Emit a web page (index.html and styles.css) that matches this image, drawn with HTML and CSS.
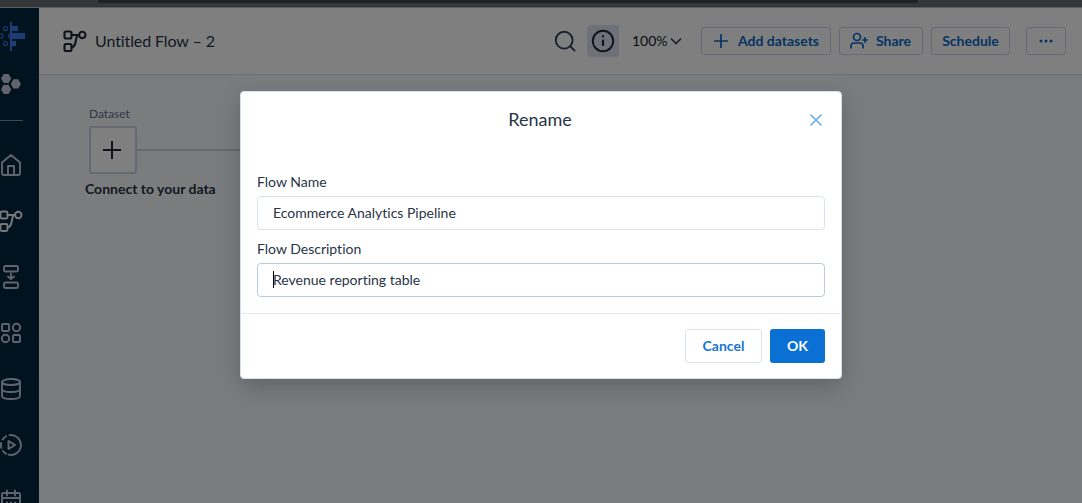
FILE: index.html
```html
<!DOCTYPE html>
<html lang="en">
<head>
<meta charset="utf-8">
<title>Untitled Flow – 2</title>
<link rel="stylesheet" href="styles.css">
</head>
<body>
<div class="browser-strip"><div class="address-bar"></div></div>
<div class="app">
  <nav class="sidebar">
    <a class="nav-item logo"><svg width="26" height="32" viewBox="0 0 26 32"><g fill="#3f7bea"><rect x="10" y="2" width="2" height="29"/><rect x="12" y="6" width="6" height="5"/><rect x="12" y="13" width="13" height="6"/><rect x="12" y="21" width="4" height="5"/></g><g fill="none" stroke="#3f7bea" stroke-width="1.1"><circle cx="5.4" cy="8.5" r="2"/><circle cx="1" cy="16" r="2"/><path d="M10.5 14a2 2 0 1 0 0 4"/><circle cx="5.4" cy="23.5" r="2"/></g></svg></a>
    <a class="nav-item apps"><svg width="24" height="24" viewBox="0 0 24 24" fill="currentColor"><path d="M4.600 2h5l2.600 4.500-2.600 4.600h-5L2 6.500zM4.600 12.800h5l2.600 4.600-2.600 4.600h-5L2 17.400zM14.300 7.300h5l2.600 4.600-2.600 4.600h-5l-2.500-4.600z"/></svg></a>
    <div class="nav-divider"></div>
    <a class="nav-item"><svg class="icon" viewBox="0 0 24 24"><path d="M3 9.500 12 2l9 7.500V20q0 2-2 2H5q-2 0-2-2zM9 22v-9h6v9"/></svg></a>
    <a class="nav-item active"><svg class="icon" viewBox="0 0 24 24"><rect x="1.500" y="2.500" width="7" height="7" rx="1.500"/><rect x="1.500" y="15" width="7" height="7" rx="1.500"/><circle cx="19.300" cy="6" r="3.200"/><path d="M8.500 6H16M8.500 18.500c5-.3 3.500-8 6-12.500"/></svg></a>
    <a class="nav-item"><svg class="icon" viewBox="0 0 24 24"><rect x="5" y="1" width="14" height="5.500" rx="1.500"/><rect x="5" y="17.500" width="14" height="5.500" rx="1.500"/><path d="M12 8.500v5M9 11.500l3 2.500 3-2.500"/></svg></a>
    <a class="nav-item"><svg class="icon" viewBox="0 0 24 24"><rect x="3" y="3" width="7" height="7" rx="1"/><circle cx="17.500" cy="6.500" r="3.700"/><circle cx="6.500" cy="17.500" r="3.700"/><rect x="14" y="14" width="7" height="7" rx="1"/></svg></a>
    <a class="nav-item"><svg class="icon" viewBox="0 0 24 24"><ellipse cx="12" cy="5" rx="9" ry="3"/><path d="M3 5v14c0 4 18 4 18 0V5M3 12c0 4 18 4 18 0"/></svg></a>
    <a class="nav-item"><svg class="icon" viewBox="0 0 24 24"><path d="M10.500 2.100A10 10 0 1 1 9.500 21.700M7 20.700A10 10 0 0 1 4 18M2.300 14.800A10 10 0 0 1 2.100 10M3.700 6.500A10 10 0 0 1 7 3.300M9.500 8v8l6.500-4z"/></svg></a>
    <a class="nav-item"><svg class="icon" viewBox="0 0 24 24"><rect x="3" y="4" width="18" height="18" rx="1"/><path d="M3 9h18M8 1.500v5M16 1.500v5"/><path d="M8 13.500h.1M12 13.500h.1M16 13.500h.1"/></svg></a>
  </nav>
  <main class="workspace">
    <header class="topbar">
      <svg class="icon flow-icon" viewBox="0 0 24 24"><rect x="1.500" y="2.500" width="7" height="7" rx="1.500"/><rect x="1.500" y="15" width="7" height="7" rx="1.500"/><circle cx="19.300" cy="6" r="3.200"/><path d="M8.500 6H16M8.500 18.500c5-.3 3.500-8 6-12.500"/></svg>
      <span class="flow-title">Untitled Flow – 2</span>
      <svg class="icon search-icon" viewBox="0 0 24 24"><circle cx="11.200" cy="11.200" r="8.400"/><path d="m17 17 4.500 4.500"/></svg>
      <span class="info-button"><svg class="icon" viewBox="0 0 24 24"><circle cx="12" cy="12" r="10.200"/><path d="M12 11.500v4.500M12 7.200v.2" stroke-width="2.200"/></svg></span>
      <span class="zoom-level">100%<svg width="12" height="12" viewBox="0 0 12 12"><path d="m1 3.500 5 5 5-5"/></svg></span>
      <button class="button add"><svg width="16" height="16" viewBox="0 0 16 16"><path d="M8 1v14M1 8h14"/></svg>Add datasets</button>
      <button class="button share"><svg width="20" height="18" viewBox="0 0 20 18"><circle cx="8" cy="5" r="3.500"/><path d="M2 16.500V14q0-3 3-3h6q3 0 3 3v2.500M16 5.200v5.600M13.200 8h5.600"/></svg>Share</button>
      <button class="button schedule">Schedule</button>
      <button class="button more"><svg width="16" height="4" viewBox="0 0 16 4"><g fill="currentColor" stroke="none"><circle cx="3" cy="2" r="1.500"/><circle cx="8" cy="2" r="1.500"/><circle cx="13" cy="2" r="1.500"/></g></svg></button>
    </header>
    <section class="canvas">
      <div class="node-label">Dataset</div>
      <div class="node-row"><div class="node"><svg width="20" height="20" viewBox="0 0 20 20"><path d="M9 1v18M0 10h18"/></svg></div><div class="connector"></div></div>
      <div class="node-caption">Connect to your data</div>
    </section>
  </main>
</div>
<div class="backdrop">
  <section class="dialog">
    <header class="dialog-header"><h1>Rename</h1><svg class="close" width="12" height="12" viewBox="0 0 12 12"><path d="m1 1 10 10M11 1 1 11"/></svg></header>
    <div class="dialog-body">
      <div class="label">Flow Name</div>
      <div class="field">Ecommerce Analytics Pipeline</div>
      <div class="label second">Flow Description</div>
      <div class="field focused"><span class="caret"></span>Revenue reporting table</div>
    </div>
    <footer class="dialog-footer"><button class="cancel">Cancel</button><button class="ok">OK</button></footer>
  </section>
</div>
</body>
</html>
```
FILE: styles.css
```css
* { box-sizing: border-box; }
body { margin: 0; width: 1082px; height: 503px; overflow: hidden; font-family: Lato, sans-serif; font-size: 14px; font-variant-ligatures: none; color: #283447; }
button { font: inherit; font-variant-ligatures: none; padding: 0; }
svg { display: block; flex: none; }
.browser-strip { height: 8px; background: #35363a; border-bottom: 1px solid #5b5c60; }
.address-bar { width: 820px; height: 3px; margin-left: 98px; background: #202124; border-radius: 0 0 8px 8px; }
.app { display: flex; height: 495px; }
.icon { width: 24px; height: 24px; fill: none; stroke: currentColor; stroke-width: 1.9; stroke-linecap: round; stroke-linejoin: round; }

.sidebar { width: 39px; flex: none; background: #00263c; overflow: hidden; color: #c5c9da; }
.nav-item { display: flex; align-items: center; height: 56px; margin-left: -1px; }
.logo { margin-left: 0; }
.nav-item.apps { height: 40px; }
.nav-item.active { color: #f2f3f5; }
.nav-divider { width: 23px; height: 1px; margin: 16px 0; background: #8290a3; }

.workspace { flex: 1; min-width: 0; background: #f7f9fc; }
.topbar { display: flex; align-items: center; height: 67px; padding: 0 16px 0 24px; background: #fff; border-bottom: 1px solid #d9def0; }
.flow-icon { stroke-width: 2.1; color: #202638; }
.flow-title { flex: 1; margin-left: 8px; padding-bottom: 2px; font-size: 16px; letter-spacing: -.1px; color: #273142; }
.search-icon { color: #38445a; stroke-width: 1.9; }
.info-button { display: grid; place-items: center; width: 32px; height: 32px; margin-left: 10px; border-radius: 4px; background: #dfe2f0; color: #202638; }
.zoom-level { display: flex; align-items: center; gap: 2px; width: 51px; margin: 0 18px 0 13px; padding-bottom: 2px; color: #111827; }
.zoom-level svg { margin-top: 2px; fill: none; stroke: #38445a; stroke-width: 1.7; }
.button { display: flex; align-items: center; justify-content: center; height: 28px; padding-bottom: 2px; border: 1px solid #cfd5ec; border-radius: 3px; background: #fff; color: #0b68c7; font-weight: 700; }
.button svg { margin-top: 2px; fill: none; stroke: currentColor; stroke-width: 1.7; }
.add { width: 130px; gap: 9px; margin-right: 8px; }
.share { width: 84px; gap: 7px; margin-right: 8px; padding-right: 2px; }
.schedule { width: 79px; margin-right: 16px; }
.more { width: 40px; }

.canvas { padding: 31px 0 0 46px; }
.node-label { padding-left: 4px; font-size: 12px; line-height: 16px; color: #617087; }
.node-row { display: flex; align-items: center; margin: 4px 0 0 4px; }
.node { display: grid; place-items: center; width: 48px; height: 48px; border: 2px solid #cdd1e5; border-radius: 3px; background: #fff; }
.node svg { fill: none; stroke: #202638; stroke-width: 2; }
.connector { width: 150px; height: 2px; background: #cdd1e5; }
.node-caption { margin-top: 6px; line-height: 17px; font-weight: 700; color: #273142; }

.backdrop { position: absolute; inset: 8px 0 0 0; display: flex; align-items: flex-start; padding: 83px 0 0 240px; background: rgba(0, 0, 0, .5); }
.dialog { width: 602px; height: 288px; border: 1px solid #d5def0; border-radius: 4px; background: #fff; box-shadow: 0 8px 24px rgba(0, 0, 0, .2); }
.dialog-header { display: grid; grid-template-columns: 1fr auto 1fr; align-items: center; height: 56px; padding: 0 20px 0 18px; }
.dialog-header h1 { grid-column: 2; margin: 0; padding-bottom: 2px; font-size: 18px; font-weight: 400; }
.close { justify-self: end; margin-right: -1px; fill: none; stroke: #6cabe5; stroke-width: 1.6; stroke-linecap: round; }
.dialog-body { height: 166px; padding: 25px 16px 0; border-bottom: 1px solid #e3e7f7; }
.label { height: 23px; line-height: 17px; }
.label.second { margin-top: 10px; }
.field { display: flex; align-items: center; height: 34px; padding: 0 15px 2px; border: 1px solid #d9e1f0; border-radius: 4px; }
.focused { border-color: #bdc9e0; }
.caret { width: 1px; height: 17px; margin-right: -1px; background: #000; }
.dialog-footer { display: flex; justify-content: flex-end; gap: 8px; padding: 15px 16px 0; }
.cancel, .ok { height: 34px; padding-bottom: 2px; border-radius: 3px; font-weight: 700; }
.cancel { width: 77px; border: 1px solid #d9e1f3; background: #fff; color: #1675d3; }
.ok { width: 55px; border: 0; background: #0a70d3; color: #fff; }
```
